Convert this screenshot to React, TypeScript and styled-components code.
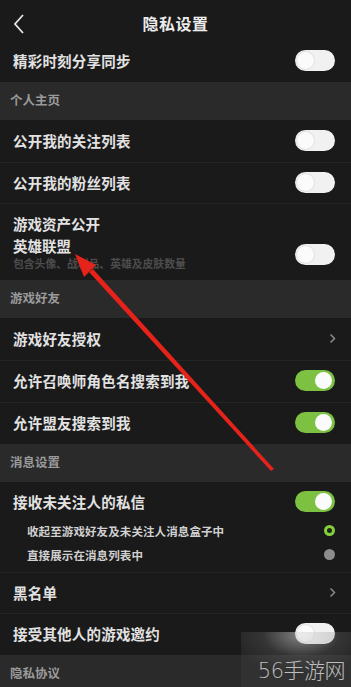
import React from "react";
import styled, { createGlobalStyle } from "styled-components";

const Global = createGlobalStyle`
  html, body { margin: 0; padding: 0; background: #1a1a1a; }
  body { font-family: "Noto Sans CJK SC", "Noto Sans", sans-serif; }
  * { box-sizing: border-box; }
`;

const Page = styled.div`
  position: relative;
  width: 351px;
  height: 687px;
  overflow: hidden;
  background: #1a1a1a;
  display: flex;
  flex-direction: column;
`;

const Header = styled.div`
  height: 41px;
  flex: none;
  display: flex;
  align-items: center;
  justify-content: center;
  position: relative;
  padding-top: 4px;
  background: #1a1a1a;
`;

const BackBtn = styled.div`
  position: absolute;
  left: 12px;
  top: 13px;
  width: 14px;
  height: 22px;
  display: flex;
  align-items: center;
`;

const Title = styled.div`
  color: #ececec;
  font-size: 16px;
  font-weight: 700;
  letter-spacing: 0.5px;
`;

const Section = styled.div`
  height: 38px;
  flex: none;
  background: #2a2a2a;
  color: #9a9a9a;
  font-size: 12.5px;
  font-weight: 700;
  display: flex;
  align-items: center;
  padding-left: 10px;
  padding-bottom: 3px;
`;

const Row = styled.div<{ $h?: number; $line?: boolean }>`
  height: ${(p) => p.$h ?? 41}px;
  flex: none;
  display: flex;
  align-items: center;
  justify-content: space-between;
  padding: 0 16px 2px 13px;
  border-top: ${(p) => (p.$line ? "1px solid #242424" : "none")};
`;

const Label = styled.div`
  color: #e2e2e2;
  font-size: 14.5px;
  font-weight: 700;
  letter-spacing: 0.2px;
`;

const AssetBlock = styled.div`
  height: 77px;
  flex: none;
  display: flex;
  align-items: center;
  justify-content: space-between;
  padding: 9px 16px 10px 13px;
  border-top: 1px solid #242424;
`;

const AssetText = styled.div`
  display: flex;
  flex-direction: column;
  align-self: flex-start;
`;

const AssetLine = styled.div`
  color: #e2e2e2;
  font-size: 14.5px;
  font-weight: 700;
  line-height: 22px;
`;

const SubNote = styled.div`
  color: #4c4c4c;
  font-size: 10.8px;
  font-weight: 700;
  line-height: 13px;
`;

const AssetToggle = styled.div`
  align-self: flex-start;
  margin-top: 31px;
`;

const Track = styled.div<{ $on: boolean }>`
  width: 40px;
  height: 21px;
  border-radius: 11px;
  background: ${(p) => (p.$on ? "#7cc142" : "#f1f1f1")};
  position: relative;
  flex: none;
`;

const Knob = styled.div<{ $on: boolean }>`
  position: absolute;
  top: 2px;
  ${(p) => (p.$on ? "right: 3px;" : "left: 2px;")}
  width: 17px;
  height: 17px;
  border-radius: 50%;
  background: #fbfbfb;
  box-shadow: ${(p) => (p.$on ? "none" : "0 0 2px rgba(0,0,0,0.18)")};
`;

const Group = styled.div`
  flex: none;
  display: flex;
  flex-direction: column;
  padding-bottom: 8px;
`;

const SubItem = styled.div`
  height: 18px;
  display: flex;
  align-items: center;
  justify-content: space-between;
  padding: 0 16px 1px 27px;
  margin-bottom: 6px;
  &:last-child { margin-bottom: 0; }
`;

const SubLabel = styled.div`
  color: #d0d0d0;
  font-size: 11.5px;
  font-weight: 700;
  letter-spacing: 0.1px;
`;

const Radio = styled.div<{ $on: boolean }>`
  width: 11px;
  height: 11px;
  border-radius: 50%;
  background: ${(p) => (p.$on ? "#1e2a14" : "#8c8c8c")};
  border: ${(p) => (p.$on ? "3px solid #84cf3c" : "none")};
`;

const Chevron = styled.div`
  width: 8px;
  display: flex;
  align-items: center;
  margin-right: -2px;
`;

const Overlay = styled.svg`
  position: absolute;
  left: 0;
  top: 0;
  pointer-events: none;
`;

const Watermark = styled.div`
  position: absolute;
  right: 0;
  bottom: 0;
  width: 110px;
  height: 55px;
  background: radial-gradient(ellipse 70px 40px at 55% 5%, rgba(220,220,220,0.55), rgba(120,120,120,0.28) 55%, rgba(70,70,70,0.25) 100%);
  display: flex;
  align-items: flex-end;
  justify-content: flex-end;
  padding: 0 6px 2px 0;
`;

const WmText = styled.div`
  color: #bdbdbd;
  font-family: "DejaVu Sans", "Noto Sans CJK SC", sans-serif;
  font-size: 21px;
  font-weight: 300;
  letter-spacing: -0.5px;
  line-height: 28px;
`;

const Toggle = ({ on }: { on: boolean }) => (
  <Track $on={on}>
    <Knob $on={on} />
  </Track>
);

const Arrow = () => (
  <Chevron>
    <svg width="7" height="11" viewBox="0 0 7 11">
      <path d="M1.5 1.5 L5.5 5.5 L1.5 9.5" fill="none" stroke="#8a8a8a" strokeWidth="1.5" />
    </svg>
  </Chevron>
);

export default function App() {
  return (
    <Page>
      <Global />
      <Header>
        <BackBtn>
          <svg width="14" height="22" viewBox="0 0 14 22">
            <path d="M11 2 L3 11 L11 20" fill="none" stroke="#e6e6e6" strokeWidth="1.8" />
          </svg>
        </BackBtn>
        <Title>隐私设置</Title>
      </Header>
      <Row $h={41}>
        <Label>精彩时刻分享同步</Label>
        <Toggle on={false} />
      </Row>
      <Section>个人主页</Section>
      <Row $h={42}>
        <Label>公开我的关注列表</Label>
        <Toggle on={false} />
      </Row>
      <Row $line>
        <Label>公开我的粉丝列表</Label>
        <Toggle on={false} />
      </Row>
      <AssetBlock>
        <AssetText>
          <AssetLine>游戏资产公开</AssetLine>
          <AssetLine>英雄联盟</AssetLine>
          <SubNote>包含头像、战利品、英雄及皮肤数量</SubNote>
        </AssetText>
        <AssetToggle>
          <Toggle on={false} />
        </AssetToggle>
      </AssetBlock>
      <Section>游戏好友</Section>
      <Row $h={42}>
        <Label>游戏好友授权</Label>
        <Arrow />
      </Row>
      <Row $h={42} $line>
        <Label>允许召唤师角色名搜索到我</Label>
        <Toggle on={true} />
      </Row>
      <Row $h={42} $line>
        <Label>允许盟友搜索到我</Label>
        <Toggle on={true} />
      </Row>
      <Section>消息设置</Section>
      <Group>
        <Row $h={40}>
          <Label>接收未关注人的私信</Label>
          <Toggle on={true} />
        </Row>
        <SubItem>
          <SubLabel>收起至游戏好友及未关注人消息盒子中</SubLabel>
          <Radio $on={true} />
        </SubItem>
        <SubItem>
          <SubLabel>直接展示在消息列表中</SubLabel>
          <Radio $on={false} />
        </SubItem>
      </Group>
      <Row $line>
        <Label>黑名单</Label>
        <Arrow />
      </Row>
      <Row $h={42} $line>
        <Label>接受其他人的游戏邀约</Label>
        <Toggle on={false} />
      </Row>
      <Section>隐私协议</Section>

      <Overlay width="351" height="687" viewBox="0 0 351 687">
        <polygon points="271,471 274,469 93,269 89,272" fill="#e5231b" />
        <polygon points="75,254 96,265 84,277" fill="#e5231b" />
      </Overlay>
      <Watermark>
        <WmText>56手游网</WmText>
      </Watermark>
    </Page>
  );
}
